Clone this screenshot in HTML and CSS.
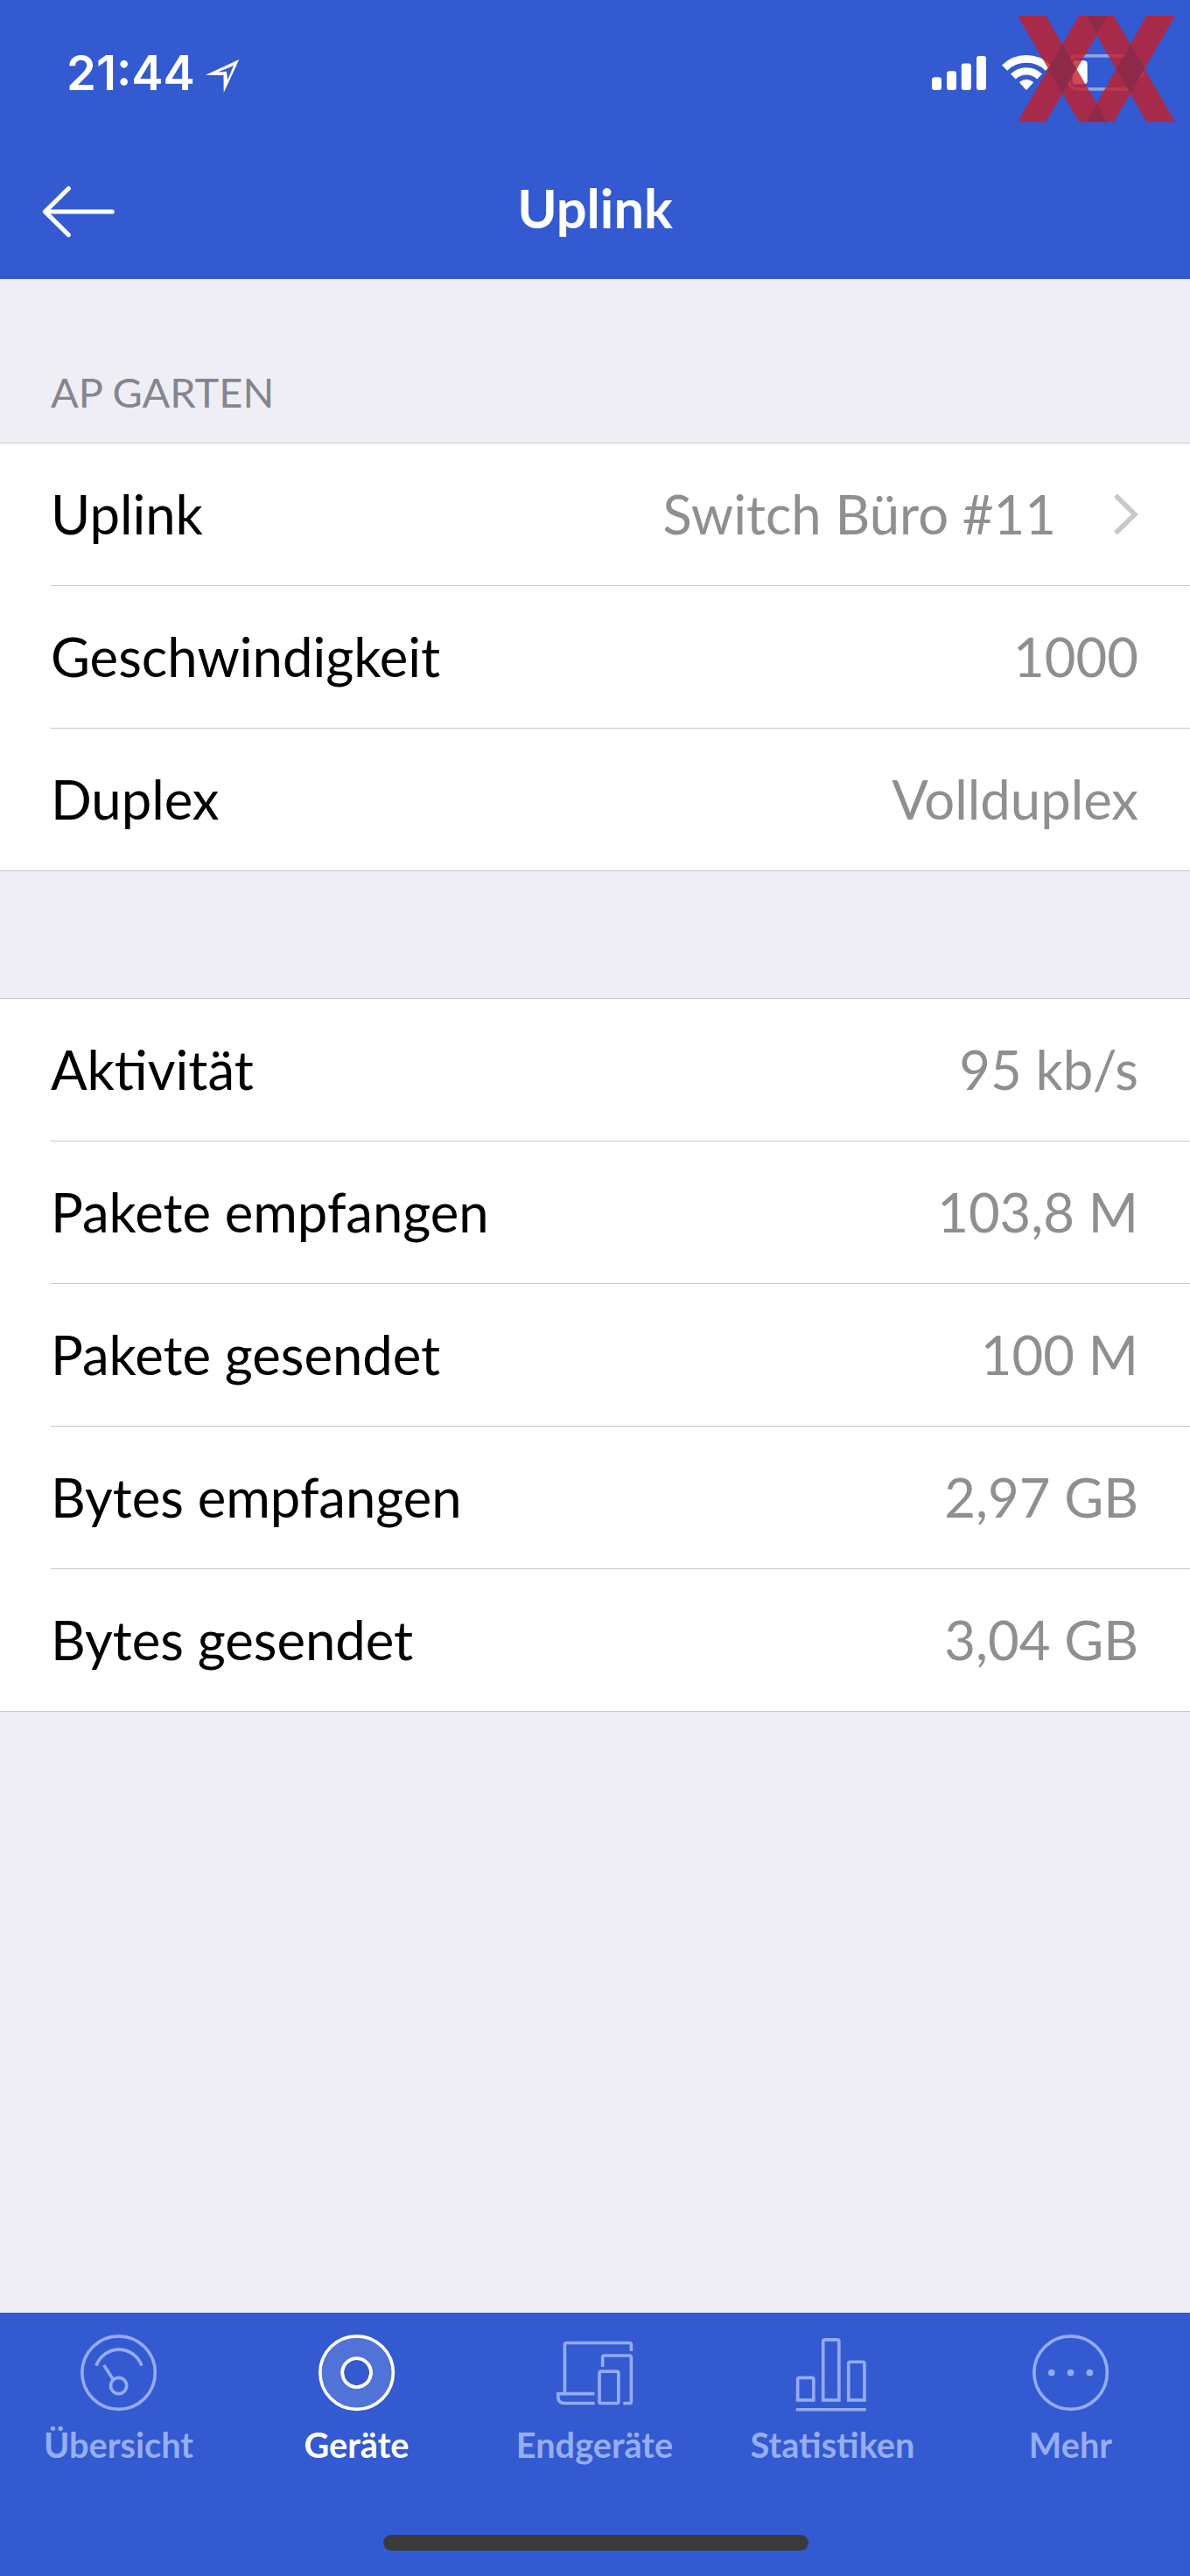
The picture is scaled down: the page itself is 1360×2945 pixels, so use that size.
FILE: index.html
```html
<!DOCTYPE html>
<html lang="de">
<head>
<meta charset="utf-8">
<title>Uplink</title>
<link rel="stylesheet" href="styles.css">
</head>
<body>
<div class="screen">
  <header class="header">
    <div class="status">
      <div class="status-left">
        <span class="time">21:44</span>
        <svg class="location" viewBox="0 0 39 39"><path fill="#fff" fill-rule="evenodd" d="M0 17.7 38.3 0 20.7 38 20.5 18ZM14.5 14.3 24 13.8 25 23.5 32 7Z"/></svg>
      </div>
      <div class="status-right">
        <svg class="signal" viewBox="0 0 62 39" fill="#fff"><rect x="0" y="24.3" width="11" height="14.7" rx="3"/><rect x="17" y="17.2" width="11" height="21.8" rx="3"/><rect x="33.8" y="8.4" width="11" height="30.6" rx="3"/><rect x="51" y="0" width="11" height="39" rx="3"/></svg>
        <svg class="wifi" viewBox="0 0 56 41" fill="none" stroke="#fff"><path stroke-width="8.8" d="M3 15.6A35.6 35.6 0 0 1 53 15.6"/><path stroke-width="8.4" d="M12.9 25.6A21.5 21.5 0 0 1 43.1 25.6"/><path fill="#fff" stroke="none" d="M20.3 32.8Q19.9 32 20.8 31.3Q28 26 35.2 31.3Q36.1 32 35.7 32.8L29 40Q28 41 27 40Z"/></svg>
        <svg class="battery" viewBox="0 0 88 42"><rect x="1.9" y="1.9" width="74.5" height="38" rx="9" fill="none" stroke="#fff" stroke-opacity=".45" stroke-width="3.6"/><rect x="5.5" y="7.3" width="17.2" height="27" rx="4" fill="#fff"/><path fill="#fff" fill-opacity=".45" d="M81 13.5Q87.5 16 87.5 21T81 28.5Z"/></svg>
      </div>
      <svg class="watermark" viewBox="0 0 540 365">
        <g fill="#c3202c" opacity=".81"><path d="M0 0H97L307 364H210ZM210 0H330L540 364H442L271 66.500L97 364H0Z"/><path d="M442 0H540L330 364H235Z"/></g>
        <g fill="#8b2a49" opacity=".94"><path d="M235 0H307L271 62ZM235 364H307L271 302ZM153.500 98 202 182 153.500 266 105 182ZM387 98 435.500 182 387 266 338.500 182Z"/></g>
      </svg>
    </div>
    <nav class="navbar">
      <svg class="back" viewBox="0 0 90 60" fill="none" stroke="#fff" stroke-width="5.200" stroke-linecap="round" stroke-linejoin="round"><path d="M83.200 30H6.500M33.300 3.500 6.500 30 33.300 56.500"/></svg>
      <h1 class="title">Uplink</h1>
    </nav>
  </header>

  <main class="content">
    <h2 class="section-title">AP GARTEN</h2>
    <section class="group">
      <div class="row"><span class="label">Uplink</span><span class="value">Switch Büro #11</span><svg class="chevron" viewBox="0 0 28 50" fill="none" stroke="#c7c7cc" stroke-width="5.500"><path d="M2 3.500 24 25 2 46.500"/></svg></div>
      <div class="row"><span class="label">Geschwindigkeit</span><span class="value">1000</span></div>
      <div class="row"><span class="label">Duplex</span><span class="value">Vollduplex</span></div>
    </section>
    <section class="group">
      <div class="row"><span class="label">Aktivität</span><span class="value">95 kb/s</span></div>
      <div class="row"><span class="label">Pakete empfangen</span><span class="value">103,8 M</span></div>
      <div class="row"><span class="label">Pakete gesendet</span><span class="value">100 M</span></div>
      <div class="row"><span class="label">Bytes empfangen</span><span class="value">2,97 GB</span></div>
      <div class="row"><span class="label">Bytes gesendet</span><span class="value">3,04 GB</span></div>
    </section>
  </main>

  <footer class="tabbar">
    <div class="tabs">
      <div class="tab">
        <svg class="icon" viewBox="0 0 24 24"><circle cx="12" cy="12" r="11.500"/><path d="M4.950 9.800A7.570 7.570 0 0 1 19.250 9.800M7.350 9.600 10.300 14.200"/><circle cx="12" cy="16.100" r="2.500"/></svg>
        <span>Übersicht</span>
      </div>
      <div class="tab active">
        <svg class="icon" viewBox="0 0 24 24"><path class="tint" d="M12 .5A11.500 11.500 0 0 1 12 23.500 11.500 11.500 0 0 1 12 .5ZM12 7.500A4.500 4.500 0 0 0 12 16.500 4.500 4.500 0 0 0 12 7.500Z"/><circle cx="12" cy="12" r="4.500"/></svg>
        <span>Geräte</span>
      </div>
      <div class="tab">
        <svg class="icon" viewBox="0 0 24 24"><path d="M23.500 5.200V3.100Q23.500 2.600 23 2.600H3.100Q2.600 2.600 2.600 3.100V18.600M12 18.600H.5V19.600Q.5 21.600 2.500 21.600H12M14.500 10.200V7.100Q14.500 6.600 15 6.600H23Q23.500 6.600 23.500 7.100V21.100Q23.500 21.600 23 21.600H21"/><rect x="13.500" y="11.600" width="6" height="10" rx=".5"/></svg>
        <span>Endgeräte</span>
      </div>
      <div class="tab">
        <svg class="icon" viewBox="-.5 0 24 24"><path d="M.5 20.600V14.100Q.5 13.600 1 13.600H5Q5.500 13.600 5.500 14.100V20.600ZM8.500 20.600V2.100Q8.500 1.600 9 1.600H13Q13.500 1.600 13.500 2.100V20.600ZM16.500 20.600V9.100Q16.500 8.600 17 8.600H21Q21.500 8.600 21.500 9.100V20.600ZM0 23.600H22"/></svg>
        <span>Statistiken</span>
      </div>
      <div class="tab">
        <svg class="icon" viewBox="0 0 24 24"><circle cx="12" cy="12" r="11.500"/><g class="dots"><circle cx="6" cy="12" r="1.060"/><circle cx="12" cy="12" r="1.060"/><circle cx="18" cy="12" r="1.060"/></g></svg>
        <span>Mehr</span>
      </div>
    </div>
    <div class="home-bar"></div>
  </footer>
</div>
</body>
</html>
```
FILE: styles.css
```css
* { box-sizing: border-box; margin: 0; padding: 0; }
body { background: #efeef4; font-family: Lato, "Liberation Sans", sans-serif; }
svg { display: block; flex: none; }

.screen { display: flex; flex-direction: column; width: 1360px; height: 2945px; overflow: hidden; }

.header { height: 319px; background: #335ad0; color: #fff; }
.status { position: relative; display: flex; justify-content: space-between; height: 155px; padding: 50px 52px 0 76px; }
.status-left { display: flex; align-items: flex-start; }
.time { font: 600 54.4px/66px Inter, sans-serif; width: 147px; }
.location { width: 39px; height: 39px; margin: 18px 0 0 12px; }
.status-right { display: flex; align-items: flex-start; padding-top: 12px; }
.signal { width: 62px; height: 39px; margin-top: 2px; }
.wifi { width: 56px; height: 41px; margin: 0 19px 0 18px; }
.battery { width: 88px; height: 42px; }
.watermark { position: absolute; left: 1163px; top: 18px; width: 180px; height: 121.7px; }

.navbar { display: grid; grid-template-columns: 1fr auto 1fr; align-items: center; height: 164px; padding: 0 45px; }
.back { width: 90px; height: 60px; margin-top: 10px; }
.title { font-size: 61.4px; font-weight: 700; line-height: 74px; }

.content { flex: 1; }
.section-title { height: 187px; padding: 101px 58px 0; color: #85858f; font-size: 46.9px; font-weight: 400; line-height: 56px; }
.group { background: #fff; border: solid #c8c7cc; border-width: 1px 0; }
.group + .group { margin-top: 145px; }
.row { display: flex; justify-content: space-between; height: 163px; margin-left: 58px; padding-right: 59px; border-bottom: 1px solid #c8c7cc; font-size: 61.6px; line-height: 160px; white-space: nowrap; }
.row:last-child { height: 162px; border-bottom: 0; }
.label { color: #000; }
.value { margin-left: auto; color: #8f8f8f; }
.chevron { width: 28px; height: 50px; margin: 56px 0 0 66px; }

.tabbar { height: 301px; padding-top: 25px; background: #335ad0; }
.tabs { display: grid; grid-template-columns: repeat(5, 1fr); }
.tab { display: flex; flex-direction: column; align-items: center; gap: 15px; padding-right: 1px; color: #96adf3; font-size: 39.7px; font-weight: 700; line-height: 48px; }
.tab.active { color: #fff; }
.icon { width: 87.2px; height: 87.2px; fill: none; stroke: #94abf8; stroke-width: 1; overflow: visible; }
.active .icon { stroke: #fff; }
.icon .tint { fill: rgba(255, 255, 255, .15); }
.icon .dots { fill: #94abf8; stroke: none; }
.home-bar { width: 486px; height: 18px; margin: 78.500px 0 0 437.500px; border-radius: 9px; background: #3a3a3a; }
```
